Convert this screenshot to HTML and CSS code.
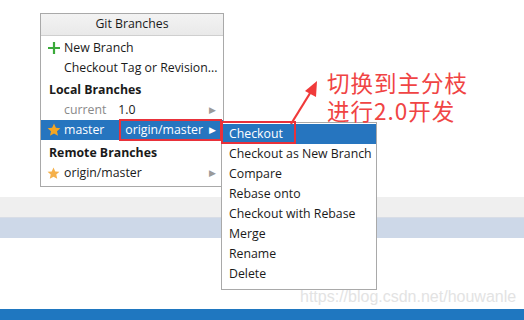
FILE: index.html
```html
<!DOCTYPE html>
<html>
<head>
<meta charset="utf-8">
<link rel="stylesheet" href="styles.css">
</head>
<body>
<div class="page">
  <div class="top"></div>
  <div class="band-gray"></div>
  <div class="band-blue"></div>
  <div class="middle"></div>
  <div class="bottom-bar"></div>

  <div class="popup">
    <div class="popup-title">Git Branches</div>
    <div class="popup-body">
      <div class="row"><span class="icon"><svg width="14" height="14" viewBox="0 0 14 14"><path d="M7 1v12M1 7h12" stroke="#3aaa3a" stroke-width="2.2"/></svg></span><span>New Branch</span></div>
      <div class="row"><span class="icon"></span><span>Checkout Tag or Revision...</span></div>
      <div class="row head">Local Branches</div>
      <div class="row"><span class="icon"></span><span class="muted">current</span><span class="ver">1.0</span><span class="arr gray">&#9654;</span></div>
      <div class="row sel"><span class="icon"><svg width="14" height="14" viewBox="0 0 14 14"><path d="M7 0.6l1.9 4.2 4.5.4-3.4 3 1 4.5L7 10.4 3 12.7l1-4.5-3.4-3 4.5-.4z" fill="#f5a623"/></svg></span><span class="name">master</span><span class="track">origin/master</span><span class="arr">&#9654;</span></div>
      <div class="row head head-remote">Remote Branches</div>
      <div class="row"><span class="icon"><svg width="13" height="13" viewBox="0 0 14 14"><path d="M7 0.6l1.9 4.2 4.5.4-3.4 3 1 4.5L7 10.4 3 12.7l1-4.5-3.4-3 4.5-.4z" fill="#f5b04a"/></svg></span><span class="name">origin/master</span><span class="arr gray">&#9654;</span></div>
    </div>
  </div>

  <div class="box box-track"></div>

  <div class="submenu">
    <div class="sitem active">Checkout</div>
    <div class="sitem">Checkout as New Branch</div>
    <div class="sitem">Compare</div>
    <div class="sitem">Rebase onto</div>
    <div class="sitem">Checkout with Rebase</div>
    <div class="sitem">Merge</div>
    <div class="sitem">Rename</div>
    <div class="sitem">Delete</div>
  </div>

  <div class="box box-checkout"></div>

  <svg class="arrow" width="40" height="50" viewBox="0 0 40 50">
    <path d="M3 46 L24 12" stroke="#f03a3a" stroke-width="2.2" fill="none"/>
    <path d="M29 3 L17 13 L28 19 Z" fill="#f03a3a"/>
  </svg>
  <div class="note">
    <div class="note-line">切换到主分枝</div>
    <div class="note-line">进行2.0开发</div>
  </div>

  <div class="watermark">https://blog.csdn.net/houwanle</div>
</div>
</body>
</html>
```

FILE: styles.css
```css
html, body {
  margin: 0;
  padding: 0;
}
body {
  font-family: "Open Sans", "Noto Sans", sans-serif;
  font-size: 12.3px;
  color: #1a1a1a;
  background: #fff;
}
.page {
  position: relative;
  width: 524px;
  height: 320px;
  overflow: hidden;
  display: flex;
  flex-direction: column;
}
.top { height: 197px; background: #fff; }
.band-gray { height: 21px; background: #efefef; border-bottom: 1px solid #d8dde6; box-sizing: border-box; }
.band-blue { height: 20px; background: #cdd8e8; }
.middle { flex: 1; background: #fff; }
.bottom-bar { height: 11px; background: #1f77c0; }

.popup {
  position: absolute;
  left: 40px;
  top: 13px;
  width: 184px;
  height: 174px;
  box-sizing: border-box;
  background: #fff;
  border: 1px solid #a9a9a9;
  display: flex;
  flex-direction: column;
}
.popup-title {
  height: 22px;
  line-height: 20px;
  text-align: center;
  background: linear-gradient(#f3f3f3, #e9e9e9);
  border-bottom: 1px solid #cfcfcf;
  box-sizing: border-box;
}
.popup-body {
  padding-top: 2px;
}
.row {
  height: 20px;
  line-height: 20px;
  display: flex;
  align-items: center;
  padding-left: 6px;
  padding-right: 7px;
  white-space: nowrap;
  box-sizing: border-box;
}
.row .icon {
  width: 17px;
  height: 20px;
  flex-shrink: 0;
  display: flex;
  align-items: center;
  justify-content: flex-start;
}
.row.head {
  font-weight: bold;
  padding-left: 8px;
  height: 22px;
  padding-top: 2px;
}
.row.head-remote {
  height: 23px;
  padding-top: 3px;
}
.muted { color: #8a8a8a; }
.ver { margin-left: 12px; }
.arr {
  margin-left: auto;
  font-size: 9px;
  color: #fff;
}
.arr.gray { color: #9a9a9a; }
.row.sel {
  background: #2675bf;
  color: #fff;
}
.track {
  margin-left: auto;
  margin-right: 6px;
}
.row.sel .arr { margin-left: 0; }

.box {
  position: absolute;
  border: 2px solid #e8313a;
  box-sizing: border-box;
}
.box-track {
  left: 119px;
  top: 119px;
  width: 103px;
  height: 22px;
}
.box-checkout {
  left: 221px;
  top: 121px;
  width: 75px;
  height: 23px;
}

.submenu {
  position: absolute;
  left: 221px;
  top: 122px;
  width: 156px;
  height: 168px;
  box-sizing: border-box;
  background: #fff;
  border: 1px solid #a9a9a9;
  padding-top: 1px;
}
.sitem {
  height: 20px;
  line-height: 20px;
  padding-left: 7px;
  white-space: nowrap;
}
.sitem.active {
  background: #2675bf;
  color: #fff;
}

.arrow {
  position: absolute;
  left: 288px;
  top: 78px;
}
.note {
  position: absolute;
  left: 327px;
  top: 68px;
  font-family: "Noto Sans CJK SC", "Noto Sans", sans-serif;
  font-size: 22.5px;
  color: #f04444;
  letter-spacing: 1px;
  display: flex;
  flex-direction: column;
}
.note-line {
  height: 28px;
  line-height: 28px;
}
.watermark {
  position: absolute;
  left: 300px;
  top: 288px;
  font-family: "Liberation Sans", Arial, sans-serif;
  font-size: 16px;
  color: #e3e3e3;
}
```
